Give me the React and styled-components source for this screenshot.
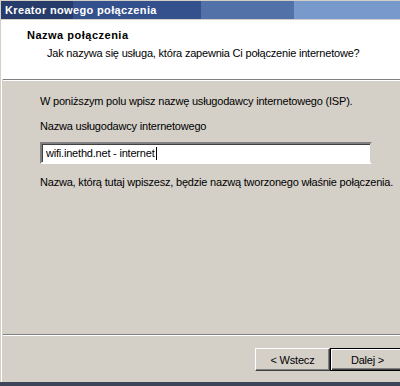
import React from "react";
import styled, { createGlobalStyle } from "styled-components";

const GlobalStyle = createGlobalStyle`
  html,
  body {
    margin: 0;
    padding: 0;
    background: #d4d0c8;
  }

  body {
    font-family: "Liberation Sans", Arial, sans-serif;
    font-size: 11px;
    letter-spacing: -0.2px;
    color: #000000;
  }
`;

const Viewport = styled.div`
  width: 400px;
  height: 386px;
  overflow: hidden;
`;

const Window = styled.div`
  box-sizing: border-box;
  display: flex;
  flex-direction: column;
  width: 412px;
  height: 386px;
  padding: 1px 0 0 1px;
  background: #d4d0c8;
  border-bottom: 4px solid #3d4658;
`;

const TitleBar = styled.div`
  display: flex;
  align-items: center;
  height: 18px;
  margin-bottom: 1px;
  padding-left: 4px;
  background: linear-gradient(
    to right,
    #283c6c 0 72px,
    #35518d 72px 200px,
    #5371a9 200px 293px,
    #7799cb 293px
  );
  color: #ffffff;
  font-weight: bold;
  font-size: 11px;
  letter-spacing: 0.35px;
  white-space: nowrap;
`;

const Body = styled.div`
  display: flex;
  flex: 1;
  flex-direction: column;
  border-left: 1px solid #ffffff;
`;

const Header = styled.div`
  box-sizing: border-box;
  height: 59px;
  padding: 9px 0 0 25px;
  background: #ffffff;
`;

const HeaderTitle = styled.div`
  font-weight: bold;
  letter-spacing: 0.5px;
  line-height: 13px;
`;

const HeaderSubtitle = styled.div`
  margin-top: 5px;
  padding-left: 20px;
  line-height: 13px;
  white-space: nowrap;
`;

const Separator = styled.div`
  margin-left: 1px;
  border-top: 1px solid #808080;
  border-bottom: 1px solid #ffffff;
`;

const Content = styled.div`
  display: flex;
  flex: 1;
  flex-direction: column;
  padding: 14px 0 0 38px;
`;

const Text = styled.div`
  line-height: 13px;
  white-space: nowrap;
  margin-top: ${({ $gap }) => $gap || 0}px;
`;

const Field = styled.div`
  box-sizing: border-box;
  display: flex;
  align-items: center;
  width: 332px;
  height: 22px;
  margin-top: 9px;
  padding-left: 4px;
  background: #ffffff;
  border: 2px solid;
  border-color: #808080 #d4d0c8 #ffffff #808080;
  box-shadow: inset 1px 1px 0 #404040;
  white-space: nowrap;
`;

const Caret = styled.span`
  display: inline-block;
  width: 1px;
  height: 13px;
  margin-left: 1px;
  background: #000000;
`;

const Footer = styled.div`
  display: flex;
  justify-content: flex-end;
  padding: 12px 7px 11px 0;
`;

const Button = styled.button`
  box-sizing: border-box;
  width: 75px;
  height: 23px;
  padding: 0;
  background: #d4d0c8;
  border: 1px solid;
  border-color: ${({ $default }) => ($default ? "#000000" : "#ffffff #404040 #404040 #ffffff")};
  box-shadow: ${({ $default }) =>
    $default
      ? "inset 1px 1px 0 #ffffff, inset -1px -1px 0 #404040, inset -2px -2px 0 #808080"
      : "inset -1px -1px 0 #808080"};
  color: #000000;
  font-family: "Liberation Sans", Arial, sans-serif;
  font-size: 11px;
  letter-spacing: -0.2px;
`;

const App = () => (
  <Viewport>
    <GlobalStyle />
    <Window>
      <TitleBar>Kreator nowego połączenia</TitleBar>
      <Body>
        <Header>
          <HeaderTitle>Nazwa połączenia</HeaderTitle>
          <HeaderSubtitle>Jak nazywa się usługa, która zapewnia Ci połączenie internetowe?</HeaderSubtitle>
        </Header>
        <Separator />
        <Content>
          <Text>W poniższym polu wpisz nazwę usługodawcy internetowego (ISP).</Text>
          <Text $gap={12}>Nazwa usługodawcy internetowego</Text>
          <Field>
            wifi.inethd.net - internet
            <Caret />
          </Field>
          <Text $gap={12}>Nazwa, którą tutaj wpiszesz, będzie nazwą tworzonego właśnie połączenia.</Text>
        </Content>
        <Separator />
        <Footer>
          <Button type="button">&lt; Wstecz</Button>
          <Button $default type="button">
            Dalej &gt;
          </Button>
        </Footer>
      </Body>
    </Window>
  </Viewport>
);

export default App;
